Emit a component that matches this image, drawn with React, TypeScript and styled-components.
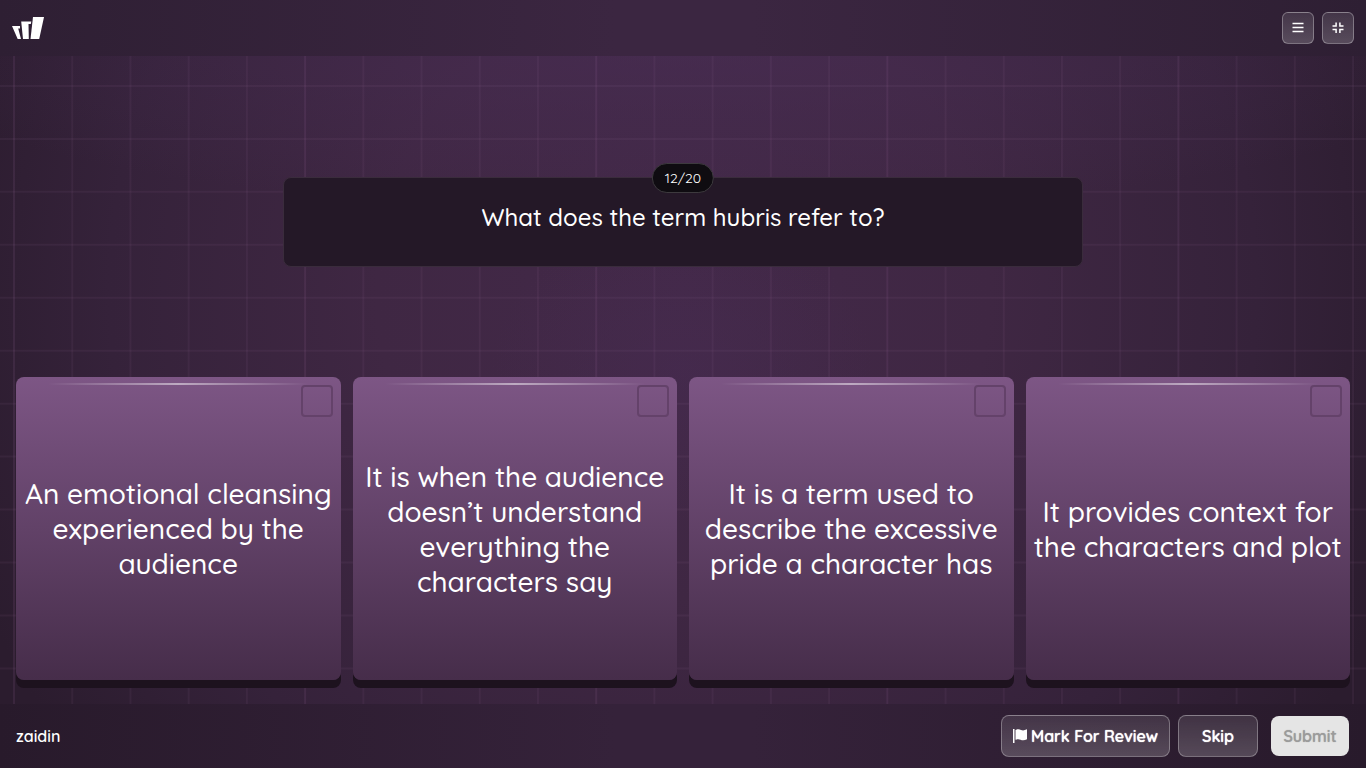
import React from "react";
import styled, { createGlobalStyle } from "styled-components";

const GlobalStyle = createGlobalStyle`
  * { box-sizing: border-box; }
  body {
    margin: 0;
    background: #2b1c2e;
    color: #fff;
    font-family: Quicksand, Inter, "Liberation Sans", sans-serif;
  }
  button { font-family: inherit; cursor: pointer; }
`;

const Page = styled.div`
  position: relative;
  isolation: isolate;
  min-height: 100vh;
  display: flex;
  flex-direction: column;
  background:
    radial-gradient(ellipse 60% 22% at 50% 6%, rgba(74, 46, 86, 0.6), rgba(74, 46, 86, 0) 100%),
    radial-gradient(ellipse 14% 20% at 50% 48%, rgba(72, 44, 84, 0.4), rgba(72, 44, 84, 0) 100%),
    radial-gradient(ellipse 56% 100% at 50% 38%, #432949 0%, #3f2743 40%, #35223a 75%, #2b1c2e 100%);
`;

const Grid = styled.svg`
  position: absolute;
  inset: 0;
  z-index: -1;
  width: 100%;
  height: 100%;
`;

const Header = styled.header`
  display: flex;
  align-items: center;
  justify-content: space-between;
  height: 56px;
  padding: 0 12px;
  background: linear-gradient(90deg, #2e1f33, #3b2641 45%, #3b2641 55%, #2e1f33);
`;

const Logo = styled.svg`
  width: 32px;
  height: 24px;
`;

const HeaderActions = styled.div`
  display: flex;
  gap: 8px;
`;

const GlassButton = styled.button`
  display: flex;
  align-items: center;
  justify-content: center;
  gap: 4px;
  padding: 0;
  color: #fff;
  border: 1px solid rgba(255, 255, 255, 0.3);
  border-radius: 8px;
  background: linear-gradient(rgba(255, 255, 255, 0.1), rgba(255, 255, 255, 0.2));
`;

const IconButton = styled(GlassButton)`
  width: 32px;
  height: 32px;
  border-radius: 6px;
`;

const Main = styled.main`
  flex: 1;
  display: flex;
  flex-direction: column;
  padding: 0 16px 16px;
`;

const QuestionArea = styled.section`
  flex: 1;
  display: flex;
  align-items: center;
  justify-content: center;
  padding: 24px 0 14px;
`;

const QuestionBox = styled.div`
  position: relative;
  width: 100%;
  max-width: 800px;
  padding: 24px 24px 34px;
  border: 1px solid #3a2c3c;
  border-radius: 8px;
  background: #241827;
  text-align: center;
`;

const Counter = styled.div`
  position: absolute;
  top: 0;
  left: 50%;
  transform: translate(-50%, -50%);
  padding: 4px 12px;
  border: 1px solid #3d3a3e;
  border-radius: 16px;
  background: #0f0c11;
  color: #fff;
  font-size: 14px;
  line-height: 20px;
`;

const Question = styled.h1`
  margin: 0;
  font-size: 24px;
  line-height: 30px;
  font-weight: 500;
`;

const Answers = styled.div`
  display: grid;
  grid-template-columns: repeat(4, minmax(0, 1fr));
  gap: 12px;
`;

const AnswerCard = styled.label`
  position: relative;
  display: flex;
  align-items: center;
  justify-content: center;
  min-height: 303px;
  margin-bottom: 8px;
  padding: 0 6px;
  border-radius: 8px;
  background: linear-gradient(#7d5685, #462d4a);
  box-shadow: 0 8px 0 #1d121e;
  font-size: 28px;
  line-height: 35px;
  font-weight: 500;
  text-align: center;
  cursor: pointer;

  &::before {
    content: "";
    position: absolute;
    top: 6px;
    left: 10%;
    right: 10%;
    height: 2px;
    background: linear-gradient(90deg, rgba(255, 255, 255, 0), rgba(255, 255, 255, 0.5), rgba(255, 255, 255, 0));
  }
`;

const Check = styled.input`
  appearance: none;
  position: absolute;
  top: 8px;
  right: 8px;
  width: 32px;
  height: 32px;
  margin: 0;
  border: 2px solid #64426a;
  border-radius: 4px;
`;

const Footer = styled.footer`
  display: flex;
  align-items: center;
  justify-content: space-between;
  height: 64px;
  padding: 0 17px 0 16px;
  background: linear-gradient(90deg, #281a2b, #35223a 45%, #35223a 55%, #281a2b);
`;

const Player = styled.span`
  font-size: 16px;
  line-height: 24px;
  font-weight: 600;
`;

const FooterActions = styled.div`
  display: flex;
  align-items: center;
  gap: 8px;
`;

const ReviewButton = styled(GlassButton)`
  height: 42px;
  width: 169px;
  font-size: 16px;
  font-weight: 600;
  text-shadow: 0 0 1px currentColor;
`;

const SkipButton = styled(ReviewButton)`
  width: 80px;
`;

const SubmitButton = styled.button`
  width: 78px;
  height: 40px;
  margin-left: 5px;
  padding: 0;
  border: 0;
  border-radius: 8px;
  background: #e5e5e5;
  color: #9b9b9b;
  font-size: 16px;
  font-weight: 600;
  text-shadow: 0 0 1px currentColor;
`;

const columns = Array.from({ length: 24 }, (_, i) => 14 + i * 58.22);
const rows = Array.from({ length: 14 }, (_, i) => 33 + i * 52.95);

const answers = [
  "An emotional cleansing experienced by the audience",
  "It is when the audience doesn’t understand everything the characters say",
  "It is a term used to describe the excessive pride a character has",
  "It provides context for the characters and plot",
];

export default function App() {
  return (
    <>
      <GlobalStyle />
      <Page>
        <Grid viewBox="0 0 1366 768" preserveAspectRatio="xMidYMid slice" aria-hidden="true">
          <g stroke="#a070a0" strokeWidth="2">
            {columns.map((x, i) => (
              <line key={x} x1={x} x2={x} y1="0" y2="768" strokeOpacity={i % 5 === 0 ? 0.13 : 0.09} />
            ))}
            {rows.map((y) => <line key={y} x1="0" x2="1366" y1={y} y2={y} strokeOpacity="0.09" />)}
          </g>
        </Grid>
        <Header>
          <Logo viewBox="0 0 32 24" fill="#fff" role="img" aria-label="Logo">
            <path d="M0 10H8V12.500H6.200L9 23H5.700Z" />
            <path d="M9.200 5.500H19.300L18.800 8H16.500L16.800 23H11Z" />
            <path d="M21 1H32L27.200 23H18.500Z" />
          </Logo>
          <HeaderActions>
            <IconButton type="button" aria-label="Menu">
              <svg width="12" height="12" viewBox="0 0 12 12" stroke="#fff" strokeWidth="1.500">
                <path d="M.5 1.600H11.500M.5 5.600H11.500M.5 9.600H11.500" />
              </svg>
            </IconButton>
            <IconButton type="button" aria-label="Exit full screen">
              <svg width="12" height="12" viewBox="0 0 12 12" fill="none" stroke="#fff" strokeWidth="1.500">
                <path d="M4.100 .5V4.100H.5M7.900 .5V4.100H11.500M.5 7.500H4.100V11.100M11.500 7.500H7.900V11.100" />
              </svg>
            </IconButton>
          </HeaderActions>
        </Header>
        <Main>
          <QuestionArea>
            <QuestionBox>
              <Counter>12/20</Counter>
              <Question>What does the term hubris refer to?</Question>
            </QuestionBox>
          </QuestionArea>
          <Answers>
            {answers.map((text) => (
              <AnswerCard key={text}>
                <Check type="checkbox" />
                <span>{text}</span>
              </AnswerCard>
            ))}
          </Answers>
        </Main>
        <Footer>
          <Player>zaidin</Player>
          <FooterActions>
            <ReviewButton type="button">
              <svg width="14" height="14" viewBox="0 0 14 14" fill="#fff" aria-hidden="true">
                <path d="M0 0H1.500V14H0Z" />
                <path d="M2.500 1C5 0 6.500 .3 8 1C10 1.700 11.500 1.400 14 .3V10.300C11.500 11.500 9.500 11.500 7.500 10.700C6 10 4.500 10 2.500 10.800Z" />
              </svg>
              Mark For Review
            </ReviewButton>
            <SkipButton type="button">Skip</SkipButton>
            <SubmitButton type="button" disabled>Submit</SubmitButton>
          </FooterActions>
        </Footer>
      </Page>
    </>
  );
}
